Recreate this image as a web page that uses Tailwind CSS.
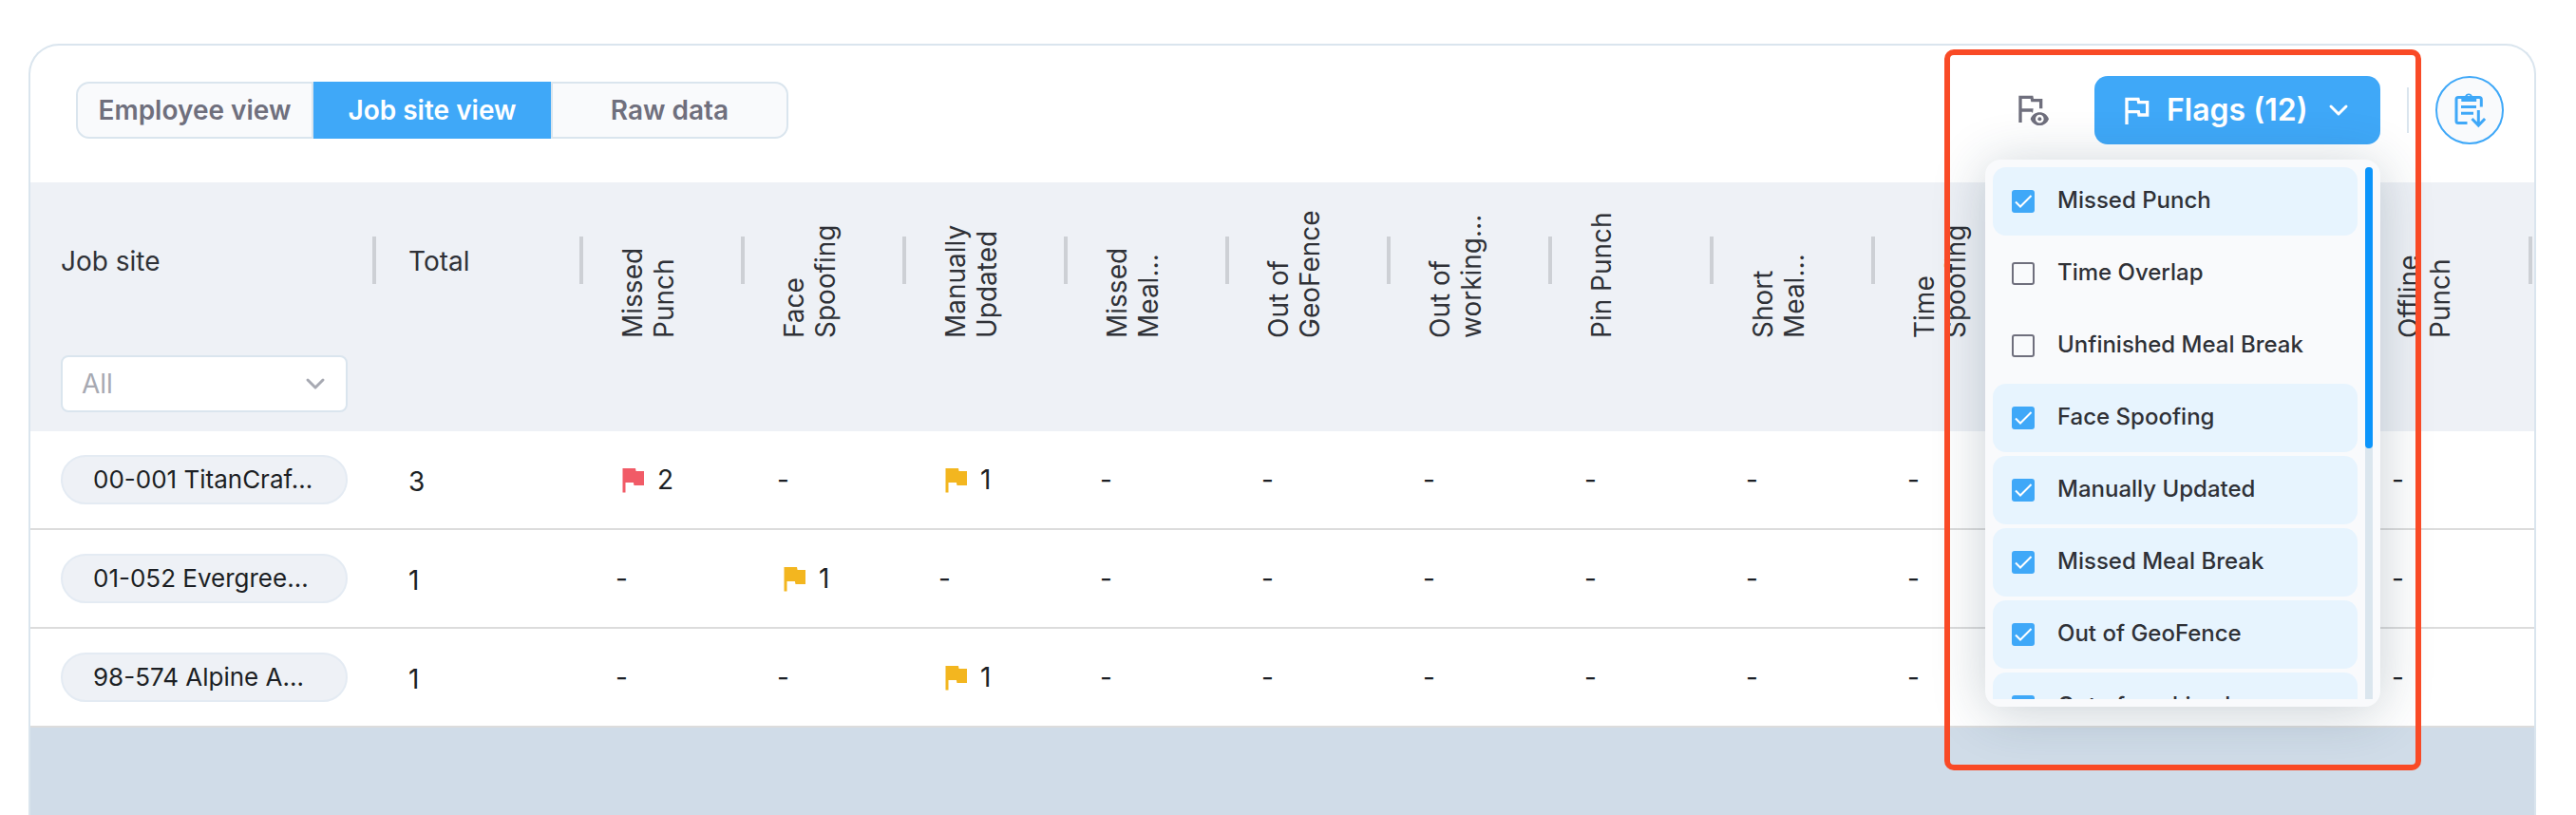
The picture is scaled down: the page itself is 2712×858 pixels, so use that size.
<!DOCTYPE html>
<html lang="en">
<head>
  <meta charset="UTF-8" />
  <meta name="viewport" content="width=device-width, initial-scale=1" />
  <title>Flags - Job site view</title>
  <script src="https://cdn.jsdelivr.net/npm/@tailwindcss/browser@4"></script>
</head>
<body class="bg-white font-['Inter',sans-serif] text-[#2f3137]">

  <!-- Shared icons -->
  <svg class="hidden">
    <symbol id="flag" viewBox="0 0 24 24"><path fill="currentColor" d="M14.4 6L14 4H5v17h2v-7h5.600l.4 2h7V6z" /></symbol>
    <symbol id="check" viewBox="0 0 24 24"><path fill="none" stroke="#fff" stroke-width="2" d="M4 12.500l5 5L20.500 6" /></symbol>
    <symbol id="chevron" viewBox="0 0 24 24"><path fill="none" stroke="currentColor" stroke-width="3" stroke-linecap="round" stroke-linejoin="round" d="M4 8l8 8 8-8" /></symbol>
  </svg>

  <main class="h-screen overflow-hidden pt-[46px] pl-[30px] pr-[42px]">
    <div class="flex h-full flex-col overflow-hidden rounded-t-[32px] border-2 border-b-0 border-[#dae5ee]">

      <!-- Toolbar -->
      <div class="flex items-center justify-between pt-8 pr-8 pb-10 pl-12">
        <div class="flex h-[60px] text-[28px] leading-8 font-semibold text-[#6f6f7d]">
          <button type="button" class="w-[250px] rounded-l-[14px] border-2 border-[#dae5ee] bg-[#f9fafc]">Employee view</button>
          <button type="button" class="w-[250px] bg-[#3fa8f8] text-white">Job site view</button>
          <button type="button" class="w-[250px] rounded-r-[14px] border-2 border-[#dae5ee] bg-[#f9fafc]">Raw data</button>
        </div>

        <div class="flex items-center gap-7">
          <button type="button" aria-label="Preview flags" class="mr-5 pb-1 text-[#6f6f7d]">
            <svg class="size-10" viewBox="0 0 24 24" fill="currentColor">
              <path d="M5 4h9l.4 2H20v6.200h-2V8h-5.200l-.4-2H7v6.200h7.200l-.4 3-.6-1H7V21H5z" />
              <path fill-rule="evenodd" d="M12.400 18.700c1-2.600 3.200-4.100 5.800-4.100s4.800 1.500 5.800 4.100c-1 2.600-3.200 4.100-5.800 4.100s-4.800-1.500-5.800-4.100zm5.800-2.600a2.600 2.600 0 1 0 0 5.200 2.600 2.600 0 0 0 0-5.200z" />
              <circle cx="18.200" cy="18.700" r="1.200" />
            </svg>
          </button>

          <div class="relative">
            <button type="button" id="flags-toggle" class="flex h-[72px] w-[301px] items-center rounded-[14px] bg-[#3fa8f8] px-6 text-[32px] leading-10 font-semibold text-white">
              <svg class="mr-3 size-10" viewBox="0 0 24 24"><path fill="currentColor" d="M12.360 6l.4 2H18v6h-3.360l-.4-2H7V6h5.360M14 4H5v17h2v-7h5.600l.4 2h7V6h-5.600L14 4z" /></svg>
              <span>Flags (12)</span>
              <svg class="mr-2 ml-auto size-6"><use href="#chevron" /></svg>
            </button>

            <!-- Flags dropdown -->
            <div id="flags-menu" class="absolute top-[88px] right-0 z-10 flex w-[416px] gap-2 rounded-2xl bg-[#f9fafc] p-2 shadow-[0_6px_56px_rgba(30,60,80,0.24)]">
              <div class="flex h-[560px] flex-1 flex-col gap-1 overflow-hidden text-[24px] leading-8 font-medium">
                <label class="flex h-[72px] shrink-0 items-center gap-6 rounded-[14px] px-5 has-checked:bg-[#e7f4fe]">
                  <span class="grid size-6 *:col-start-1 *:row-start-1">
                    <input type="checkbox" checked class="peer size-6 appearance-none rounded-[3px] border-2 border-[#6f6f7d] checked:border-0 checked:bg-[#3fa8f8]" />
                    <svg class="pointer-events-none hidden size-6 peer-checked:block"><use href="#check" /></svg>
                  </span>
                  <span class="pb-[2px]">Missed Punch</span>
                </label>
                <label class="flex h-[72px] shrink-0 items-center gap-6 rounded-[14px] px-5 has-checked:bg-[#e7f4fe]">
                  <span class="grid size-6 *:col-start-1 *:row-start-1">
                    <input type="checkbox" class="peer size-6 appearance-none rounded-[3px] border-2 border-[#6f6f7d] checked:border-0 checked:bg-[#3fa8f8]" />
                    <svg class="pointer-events-none hidden size-6 peer-checked:block"><use href="#check" /></svg>
                  </span>
                  <span class="pb-[2px]">Time Overlap</span>
                </label>
                <label class="flex h-[72px] shrink-0 items-center gap-6 rounded-[14px] px-5 has-checked:bg-[#e7f4fe]">
                  <span class="grid size-6 *:col-start-1 *:row-start-1">
                    <input type="checkbox" class="peer size-6 appearance-none rounded-[3px] border-2 border-[#6f6f7d] checked:border-0 checked:bg-[#3fa8f8]" />
                    <svg class="pointer-events-none hidden size-6 peer-checked:block"><use href="#check" /></svg>
                  </span>
                  <span class="pb-[2px]">Unfinished Meal Break</span>
                </label>
                <label class="flex h-[72px] shrink-0 items-center gap-6 rounded-[14px] px-5 has-checked:bg-[#e7f4fe]">
                  <span class="grid size-6 *:col-start-1 *:row-start-1">
                    <input type="checkbox" checked class="peer size-6 appearance-none rounded-[3px] border-2 border-[#6f6f7d] checked:border-0 checked:bg-[#3fa8f8]" />
                    <svg class="pointer-events-none hidden size-6 peer-checked:block"><use href="#check" /></svg>
                  </span>
                  <span class="pb-[2px]">Face Spoofing</span>
                </label>
                <label class="flex h-[72px] shrink-0 items-center gap-6 rounded-[14px] px-5 has-checked:bg-[#e7f4fe]">
                  <span class="grid size-6 *:col-start-1 *:row-start-1">
                    <input type="checkbox" checked class="peer size-6 appearance-none rounded-[3px] border-2 border-[#6f6f7d] checked:border-0 checked:bg-[#3fa8f8]" />
                    <svg class="pointer-events-none hidden size-6 peer-checked:block"><use href="#check" /></svg>
                  </span>
                  <span class="pb-[2px]">Manually Updated</span>
                </label>
                <label class="flex h-[72px] shrink-0 items-center gap-6 rounded-[14px] px-5 has-checked:bg-[#e7f4fe]">
                  <span class="grid size-6 *:col-start-1 *:row-start-1">
                    <input type="checkbox" checked class="peer size-6 appearance-none rounded-[3px] border-2 border-[#6f6f7d] checked:border-0 checked:bg-[#3fa8f8]" />
                    <svg class="pointer-events-none hidden size-6 peer-checked:block"><use href="#check" /></svg>
                  </span>
                  <span class="pb-[2px]">Missed Meal Break</span>
                </label>
                <label class="flex h-[72px] shrink-0 items-center gap-6 rounded-[14px] px-5 has-checked:bg-[#e7f4fe]">
                  <span class="grid size-6 *:col-start-1 *:row-start-1">
                    <input type="checkbox" checked class="peer size-6 appearance-none rounded-[3px] border-2 border-[#6f6f7d] checked:border-0 checked:bg-[#3fa8f8]" />
                    <svg class="pointer-events-none hidden size-6 peer-checked:block"><use href="#check" /></svg>
                  </span>
                  <span class="pb-[2px]">Out of GeoFence</span>
                </label>
                <label class="flex h-[72px] shrink-0 items-center gap-6 rounded-[14px] px-5 has-checked:bg-[#e7f4fe]">
                  <span class="grid size-6 *:col-start-1 *:row-start-1">
                    <input type="checkbox" checked class="peer size-6 appearance-none rounded-[3px] border-2 border-[#6f6f7d] checked:border-0 checked:bg-[#3fa8f8]" />
                    <svg class="pointer-events-none hidden size-6 peer-checked:block"><use href="#check" /></svg>
                  </span>
                  <span class="pb-[2px]">Out of working hours</span>
                </label>
              </div>
              <!-- scrollbar -->
              <div class="w-2 rounded-t-full bg-[#dbe6ee]">
                <div class="h-[296px] rounded-full bg-[#0c95fb]"></div>
              </div>
            </div>

            <!-- highlight frame -->
            <div class="pointer-events-none absolute -top-7 -right-[43px] z-20 h-[759px] w-[502px] rounded-[10px] border-6 border-[#f94a26]"></div>
          </div>

          <div class="h-12 w-[2px] bg-[#dae5ee]"></div>

          <button type="button" aria-label="Export report" class="flex size-[72px] items-center justify-center rounded-full border-2 border-[#3fa8f8] bg-[#f9fafc] text-[#3fa8f8]">
            <svg class="size-10" viewBox="0 0 40 40" fill="none" stroke="currentColor" stroke-width="3">
              <path stroke-linecap="butt" stroke-linejoin="round" d="M17.500 33.500H8Q6 33.500 6 31.500V8.500Q6 6.500 8 6.500H30Q32.300 6.500 32.300 8.500V16.500" />
              <path stroke="none" fill="currentColor" fill-rule="evenodd" d="M11.300 5.500H15a4.200 4.200 0 0 1 8 0h4.200v5.500H11.300zM19.100 4a1.700 1.700 0 1 0 0 3.400 1.700 1.700 0 0 0 0-3.400z" />
              <path d="M11 16.500h16M11 23.300h13" />
              <path d="M29.300 20v16M22.500 29l6.800 7 6.800-7" />
            </svg>
          </button>
        </div>
      </div>

      <!-- Flags table -->
      <table class="w-full table-fixed border-separate border-spacing-0 text-left text-[28px] leading-[33px]">
        <colgroup>
          <col class="w-[366px]" />
          <col class="w-[218px]" />
          <col class="w-[170px]" />
          <col class="w-[170px]" />
          <col class="w-[170px]" />
          <col class="w-[170px]" />
          <col class="w-[170px]" />
          <col class="w-[170px]" />
          <col class="w-[170px]" />
          <col class="w-[170px]" />
          <col class="w-[170px]" />
          <col class="w-[170px]" />
          <col class="w-[170px]" />
          <col />
        </colgroup>
        <thead class="bg-[#eef1f6]">
          <tr class="*:p-0 *:font-normal">
            <th><div class="flex h-[164px] items-center justify-between pr-[2px] pl-8"><span class="pt-[2px]">Job site</span><i class="h-[50px] w-1 bg-[#cdd0d5]"></i></div></th>
            <th><div class="flex h-[164px] items-center justify-between pr-[2px] pl-8"><span class="pt-[2px]">Total</span><i class="h-[50px] w-1 bg-[#cdd0d5]"></i></div></th>
            <th><div class="flex h-[164px] items-center justify-between pr-[2px] pl-[34px]"><span class="h-full rotate-180 [writing-mode:vertical-rl]">Missed<br />Punch</span><i class="h-[50px] w-1 bg-[#cdd0d5]"></i></div></th>
            <th><div class="flex h-[164px] items-center justify-between pr-[2px] pl-[34px]"><span class="h-full rotate-180 [writing-mode:vertical-rl]">Face<br />Spoofing</span><i class="h-[50px] w-1 bg-[#cdd0d5]"></i></div></th>
            <th><div class="flex h-[164px] items-center justify-between pr-[2px] pl-[34px]"><span class="h-full rotate-180 [writing-mode:vertical-rl]">Manually<br />Updated</span><i class="h-[50px] w-1 bg-[#cdd0d5]"></i></div></th>
            <th><div class="flex h-[164px] items-center justify-between pr-[2px] pl-[34px]"><span class="h-full rotate-180 [writing-mode:vertical-rl]">Missed<br />Meal…</span><i class="h-[50px] w-1 bg-[#cdd0d5]"></i></div></th>
            <th><div class="flex h-[164px] items-center justify-between pr-[2px] pl-[34px]"><span class="h-full rotate-180 [writing-mode:vertical-rl]">Out of<br />GeoFence</span><i class="h-[50px] w-1 bg-[#cdd0d5]"></i></div></th>
            <th><div class="flex h-[164px] items-center justify-between pr-[2px] pl-[34px]"><span class="h-full rotate-180 [writing-mode:vertical-rl]">Out of<br />working…</span><i class="h-[50px] w-1 bg-[#cdd0d5]"></i></div></th>
            <th><div class="flex h-[164px] items-center justify-between pr-[2px] pl-[34px]"><span class="h-full rotate-180 [writing-mode:vertical-rl]">Pin Punch</span><i class="h-[50px] w-1 bg-[#cdd0d5]"></i></div></th>
            <th><div class="flex h-[164px] items-center justify-between pr-[2px] pl-[34px]"><span class="h-full rotate-180 [writing-mode:vertical-rl]">Short<br />Meal…</span><i class="h-[50px] w-1 bg-[#cdd0d5]"></i></div></th>
            <th><div class="flex h-[164px] items-center justify-between pr-[2px] pl-[34px]"><span class="h-full rotate-180 [writing-mode:vertical-rl]">Time<br />Spoofing</span><i class="h-[50px] w-1 bg-[#cdd0d5]"></i></div></th>
            <th></th>
            <th></th>
            <th><div class="flex h-[164px] items-center justify-between pr-[2px] pl-[34px]"><span class="h-full rotate-180 [writing-mode:vertical-rl]">Offline<br />Punch</span><i class="h-[50px] w-1 bg-[#cdd0d5]"></i></div></th>
          </tr>
          <tr>
            <th class="px-8 pt-[18px] pb-5 font-normal">
              <div class="relative text-[#a7a9b2]">
                <select aria-label="Job site" class="block h-[60px] w-full appearance-none rounded-lg border-2 border-[#dae5ee] bg-white pl-5">
                  <option>All</option>
                </select>
                <svg class="pointer-events-none absolute top-[18px] right-[22px] size-6"><use href="#chevron" /></svg>
              </div>
            </th>
            <th colspan="13"></th>
          </tr>
        </thead>
        <tbody class="text-[#1c1f24]">
          <tr class="h-[104px] *:border-b-2 *:border-[#dcdcdc] *:py-0 *:pl-8">
            <td><a href="#" class="mr-8 block h-[52px] rounded-full border-2 border-[#e4ebf3] bg-[#eef1f6] px-8 text-[26px] leading-[48px]">00-001 TitanCraf…</a></td>
            <td><div class="pt-1">3</div></td>
            <td><div class="flex items-center gap-2"><svg class="size-9 text-[#f15b67]"><use href="#flag" /></svg>2</div></td>
            <td>-</td>
            <td><div class="flex items-center gap-2"><svg class="size-9 text-[#f3b61f]"><use href="#flag" /></svg>1</div></td>
            <td>-</td>
            <td>-</td>
            <td>-</td>
            <td>-</td>
            <td>-</td>
            <td>-</td>
            <td></td>
            <td></td>
            <td>-</td>
          </tr>
          <tr class="h-[104px] *:border-b-2 *:border-[#dcdcdc] *:py-0 *:pl-8">
            <td><a href="#" class="mr-8 block h-[52px] rounded-full border-2 border-[#e4ebf3] bg-[#eef1f6] px-8 text-[26px] leading-[48px]">01-052 Evergree…</a></td>
            <td><div class="pt-1">1</div></td>
            <td>-</td>
            <td><div class="flex items-center gap-2"><svg class="size-9 text-[#f3b61f]"><use href="#flag" /></svg>1</div></td>
            <td>-</td>
            <td>-</td>
            <td>-</td>
            <td>-</td>
            <td>-</td>
            <td>-</td>
            <td>-</td>
            <td></td>
            <td></td>
            <td>-</td>
          </tr>
          <tr class="h-[104px] *:border-b-2 *:border-[#dcdcdc] *:py-0 *:pl-8">
            <td><a href="#" class="mr-8 block h-[52px] rounded-full border-2 border-[#e4ebf3] bg-[#eef1f6] px-8 text-[26px] leading-[48px]">98-574 Alpine A…</a></td>
            <td><div class="pt-1">1</div></td>
            <td>-</td>
            <td>-</td>
            <td><div class="flex items-center gap-2"><svg class="size-9 text-[#f3b61f]"><use href="#flag" /></svg>1</div></td>
            <td>-</td>
            <td>-</td>
            <td>-</td>
            <td>-</td>
            <td>-</td>
            <td>-</td>
            <td></td>
            <td></td>
            <td>-</td>
          </tr>
        </tbody>
      </table>

      <div class="flex-1 bg-[#d0dce8]"></div>
    </div>
  </main>

  <script>
    const flagsToggle = document.getElementById("flags-toggle");
    const flagsMenu = document.getElementById("flags-menu");

    flagsToggle.addEventListener("click", () => {
      flagsMenu.classList.toggle("hidden");
    });
  </script>

</body>
</html>
